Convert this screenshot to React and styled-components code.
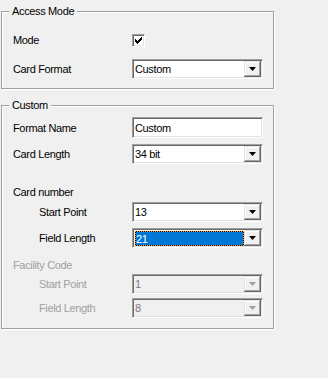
import React from "react";
import styled, { createGlobalStyle } from "styled-components";

const Global = createGlobalStyle`
  html, body { margin: 0; padding: 0; background: #f0f0f0; }
  body {
    font-family: "Liberation Sans", Arial, sans-serif;
    font-size: 11px;
    letter-spacing: -0.35px;
    color: #000;
  }
`;

const Page = styled.div`
  width: 328px;
  height: 378px;
  box-sizing: border-box;
  padding: 11px 0 0 1px;
  background: #f0f0f0;
`;

const Group = styled.section`
  width: 273px;
  box-sizing: border-box;
  border: 1px solid #a0a0a0;
  box-shadow: 1px 1px 0 #fff, inset 1px 1px 0 #fff;
  padding: 0 0 ${(p) => p.$pb}px 11px;
  margin-bottom: ${(p) => p.$mb || 0}px;
`;

const Title = styled.div`
  width: fit-content;
  height: 13px;
  line-height: 13px;
  margin: -7px 0 0 -4px;
  padding: 0 3px;
  background: #f0f0f0;
`;

const Row = styled.div`
  display: grid;
  grid-template-columns: 119px 131px;
  align-items: center;
  height: ${(p) => p.$h}px;
  margin-top: ${(p) => p.$mt}px;
`;

const Label = styled.span`
  padding-left: ${(p) => (p.$indent ? 26 : 0)}px;
  color: ${(p) => (p.$disabled ? "#a0a0a0" : "#000")};
  white-space: nowrap;
`;

const Sunken = styled.div`
  box-sizing: border-box;
  border: 1px solid;
  border-color: #a0a0a0 #fff #fff #a0a0a0;
  box-shadow: inset 1px 1px 0 #696969, inset -1px -1px 0 #e3e3e3;
`;

const Combo = styled(Sunken)`
  height: 20px;
  padding: 1px;
  display: flex;
  background: ${(p) => (p.$disabled ? "#f0f0f0" : "#fff")};
  color: ${(p) => (p.$disabled ? "#7a7a7a" : "#000")};
`;

const Value = styled.div`
  flex: 1;
  display: flex;
  align-items: center;
  padding-left: 1px;
  min-width: 0;
`;

const Focus = styled.div`
  flex: 1;
  margin: 1px 0 0 1px;
  padding: 1px;
  background: repeating-conic-gradient(#000 0 25%, #ff9d1c 0 50%) 0 0 / 2px 2px;
  display: flex;
`;

const Selected = styled.div`
  flex: 1;
  background: #0078d7;
  color: #fff;
  display: flex;
  align-items: center;
`;

const DropButton = styled.div`
  width: 17px;
  flex: none;
  background: #f0f0f0;
  box-shadow: inset -1px -1px 0 #696969, inset 1px 1px 0 #e3e3e3,
    inset -2px -2px 0 #a0a0a0, inset 2px 2px 0 #fff;
  display: flex;
  align-items: center;
  justify-content: center;
`;

const TextBox = styled(Sunken)`
  height: 21px;
  background: #fff;
  padding: 0 0 0 2px;
  display: flex;
  align-items: center;
`;

const CheckBox = styled(Sunken)`
  width: 13px;
  height: 13px;
  background: #fff;
  display: flex;
  align-items: center;
  justify-content: center;
`;

const Arrow = ({ disabled }) => (
  <svg width="7" height="4" viewBox="0 0 7 4">
    <polygon points="0,0 7,0 3.5,4" fill={disabled ? "#a0a0a0" : "#000"} />
  </svg>
);

const Select = ({ value, disabled, focused }) => (
  <Combo $disabled={disabled}>
    {focused ? (
      <Focus>
        <Selected>{value}</Selected>
      </Focus>
    ) : (
      <Value>{value}</Value>
    )}
    <DropButton>
      <Arrow disabled={disabled} />
    </DropButton>
  </Combo>
);

export default function App() {
  return (
    <>
      <Global />
      <Page>
        <Group $pb={9} $mb={16}>
          <Title>Access Mode</Title>
          <Row $h={20} $mt={12}>
            <Label>Mode</Label>
            <CheckBox>
              <svg width="7" height="7" viewBox="0 0 7 7" shapeRendering="crispEdges">
                <path
                  d="M6 0h1v3h-1v1h-1v1h-1v1h-1v1h-1v-1h-1v-1h-1v-3h1v1h1v1h1v-1h1v-1h1v-1h1z"
                  fill="#000"
                />
              </svg>
            </CheckBox>
          </Row>
          <Row $h={20} $mt={9}>
            <Label>Card Format</Label>
            <Select value="Custom" />
          </Row>
        </Group>

        <Group $pb={10}>
          <Title>Custom</Title>
          <Row $h={21} $mt={5}>
            <Label>Format Name</Label>
            <TextBox>Custom</TextBox>
          </Row>
          <Row $h={20} $mt={6}>
            <Label>Card Length</Label>
            <Select value="34 bit" />
          </Row>
          <Row $h={14} $mt={21}>
            <Label>Card number</Label>
          </Row>
          <Row $h={20} $mt={3}>
            <Label $indent>Start Point</Label>
            <Select value="13" />
          </Row>
          <Row $h={20} $mt={6}>
            <Label $indent>Field Length</Label>
            <Select value="21" focused />
          </Row>
          <Row $h={14} $mt={10}>
            <Label $disabled>Facility Code</Label>
          </Row>
          <Row $h={20} $mt={2}>
            <Label $indent $disabled>Start Point</Label>
            <Select value="1" disabled />
          </Row>
          <Row $h={20} $mt={4}>
            <Label $indent $disabled>Field Length</Label>
            <Select value="8" disabled />
          </Row>
        </Group>
      </Page>
    </>
  );
}
